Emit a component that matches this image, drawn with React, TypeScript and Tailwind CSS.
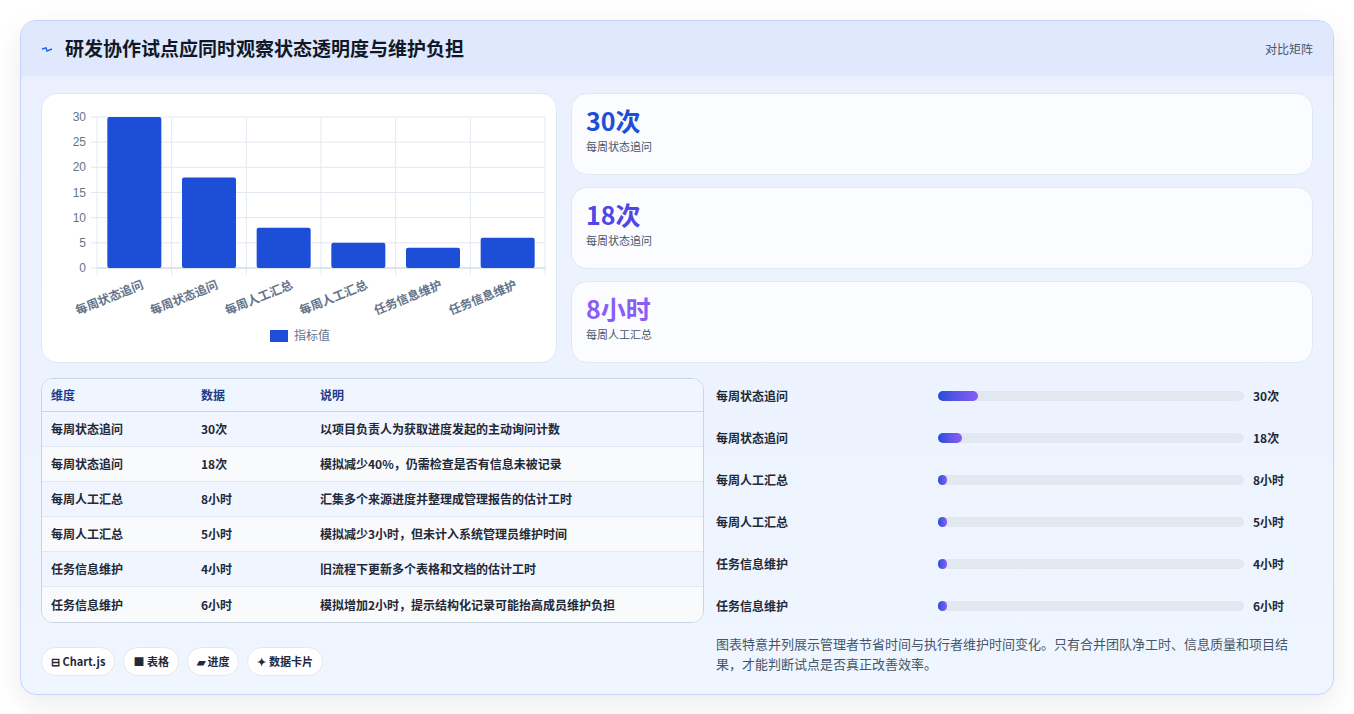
import React from 'react';

const font = { fontFamily: '"Noto Sans CJK SC", "Noto Sans", sans-serif' };

const bars = [
  { label: '每周状态追问', value: 30 },
  { label: '每周状态追问', value: 18 },
  { label: '每周人工汇总', value: 8 },
  { label: '每周人工汇总', value: 5 },
  { label: '任务信息维护', value: 4 },
  { label: '任务信息维护', value: 6 },
];

const rows = [
  { dim: '每周状态追问', data: '30次', note: '以项目负责人为获取进度发起的主动询问计数', pct: 13 },
  { dim: '每周状态追问', data: '18次', note: '模拟减少40%，仍需检查是否有信息未被记录', pct: 8 },
  { dim: '每周人工汇总', data: '8小时', note: '汇集多个来源进度并整理成管理报告的估计工时', pct: 3 },
  { dim: '每周人工汇总', data: '5小时', note: '模拟减少3小时，但未计入系统管理员维护时间', pct: 3 },
  { dim: '任务信息维护', data: '4小时', note: '旧流程下更新多个表格和文档的估计工时', pct: 3 },
  { dim: '任务信息维护', data: '6小时', note: '模拟增加2小时，提示结构化记录可能抬高成员维护负担', pct: 3 },
];

const stats = [
  { v: '30次', c: 'text-[#1d4ed8]' },
  { v: '18次', c: 'text-[#4f46e5]' },
  { v: '8小时', c: 'text-[#8b5cf6]' },
];
const statLabels = ['每周状态追问', '每周状态追问', '每周人工汇总'];

function Chart() {
  const x0 = 55, x1 = 503, y0 = 23, y1 = 174;
  const step = (x1 - x0) / 6;
  const sy = (v: number) => y1 - ((y1 - y0) * v) / 30;
  return (
    <svg width="516" height="269" viewBox="0 0 516 269">
      {[0, 5, 10, 15, 20, 25, 30].map((t) => (
        <g key={t}>
          <line x1={x0 - 6} x2={x1} y1={sy(t)} y2={sy(t)} stroke="#e2e8f0" />
          <text x={x0 - 11} y={sy(t) + 4} textAnchor="end" fontSize="12" fill="#64748b" fontFamily="Liberation Sans, sans-serif">{t}</text>
        </g>
      ))}
      {Array.from({ length: 7 }).map((_, i) => (
        <line key={i} x1={x0 + i * step} x2={x0 + i * step} y1={y0} y2={y1 + 7} stroke="#e2e8f0" />
      ))}
      <line x1={x0} x2={x1} y1={y1} y2={y1} stroke="#cbd5e1" />
      {bars.map((b, i) => {
        const cx = x0 + step * i + step / 2;
        return (
          <g key={i}>
            <rect x={cx - 27} y={sy(b.value)} width="54" height={y1 - sy(b.value)} rx="2" fill="#1d4ed8" />
            <text x={cx + 10} y={y1 + 20} textAnchor="end" fontSize="12" fontWeight="600" fill="#64748b" transform={`rotate(-22 ${cx + 10} ${y1 + 20})`} style={font}>{b.label}</text>
          </g>
        );
      })}
      <rect x="228" y="236" width="18" height="12" fill="#1d4ed8" />
      <text x="252" y="246" fontSize="12" fill="#64748b" style={font}>指标值</text>
    </svg>
  );
}

export default function App() {
  return (
    <div className="min-h-screen bg-white p-5" style={font}>
      <div className="rounded-2xl border border-[#c7d2fe] bg-gradient-to-b from-[#eaf0fe] to-[#eff6ff] shadow-[0_10px_30px_rgba(0,0,0,0.08)] overflow-hidden">
        <div className="flex items-center justify-between h-[55px] px-5 bg-[#dfe8fd]">
          <div className="flex items-center gap-3">
            <svg width="12" height="10" viewBox="0 0 12 10"><path d="M1 5 L5 4 L6 7 L11 5" stroke="#2563eb" strokeWidth="1.5" fill="none" /></svg>
            <h1 className="text-[19px] font-bold text-[#111827]">研发协作试点应同时观察状态透明度与维护负担</h1>
          </div>
          <span className="text-[12px] text-[#475569]">对比矩阵</span>
        </div>
        <div className="px-5 pt-[17px] pb-[18px]">
          <div className="flex gap-[14px]">
            <div className="w-[516px] h-[270px] shrink-0 rounded-2xl bg-white border border-[#e2e8f0]">
              <Chart />
            </div>
            <div className="flex-1 flex flex-col gap-3">
              {stats.map((s, i) => (
                <div key={i} className="h-[82px] rounded-2xl border border-[#e2e8f0] bg-[#fafcff] px-[14px] pt-[8px]">
                  <div className={`text-[25px] font-bold leading-[36px] ${s.c}`}>{s.v}</div>
                  <div className="text-[11px] text-[#475569]">{statLabels[i]}</div>
                </div>
              ))}
            </div>
          </div>
          <div className="flex gap-3 mt-[15px]">
            <div className="w-[663px] shrink-0">
              <div className="rounded-xl border border-[#cbd5e1] overflow-hidden bg-white text-[12px]">
                <div className="flex h-[33px] items-center bg-[#eff6ff] border-b border-[#cbd5e1] font-semibold text-[#1e3a8a]">
                  <div className="w-[159px] pl-[9px]">维度</div>
                  <div className="w-[119px]">数据</div>
                  <div className="flex-1">说明</div>
                </div>
                {rows.map((r, i) => (
                  <div key={i} className={`flex h-[35px] items-center font-semibold text-[#1f2937] ${i < 5 ? 'border-b border-[#e2e8f0]' : ''} ${i % 2 === 0 ? 'bg-[#f1f5ff]' : 'bg-[#f8fafc]'}`}>
                    <div className="w-[159px] pl-[9px]">{r.dim}</div>
                    <div className="w-[119px]">{r.data}</div>
                    <div className="flex-1">{r.note}</div>
                  </div>
                ))}
              </div>
              <div className="flex gap-2 mt-6 text-[11px] font-semibold text-[#1f2937]">
                <span className="rounded-full bg-white border border-[#e5e7eb] px-[9px] py-[5px]">⊟ Chart.js</span>
                <span className="rounded-full bg-white border border-[#e5e7eb] px-[9px] py-[5px]">■ 表格</span>
                <span className="rounded-full bg-white border border-[#e5e7eb] px-[9px] py-[5px]">▰ 进度</span>
                <span className="rounded-full bg-white border border-[#e5e7eb] px-[9px] py-[5px]">✦ 数据卡片</span>
              </div>
            </div>
            <div className="flex-1 pr-1">
              <div className="flex flex-col gap-[22px] pt-[8px]">
                {rows.map((r, i) => (
                  <div key={i} className="flex items-center h-[20px] text-[12px] font-semibold text-[#1f2937]">
                    <div className="w-[222px]">{r.dim}</div>
                    <div className="w-[306px] h-[10px] rounded-full bg-[#e2e8f0]">
                      <div className="h-full rounded-full bg-gradient-to-r from-[#1d4ed8] to-[#8b5cf6]" style={{ width: `${r.pct}%` }} />
                    </div>
                    <div className="pl-[9px]">{r.data}</div>
                  </div>
                ))}
              </div>
              <p className="mt-[18px] text-[13px] leading-[20px] text-[#475569]">
                图表特意并列展示管理者节省时间与执行者维护时间变化。只有合并团队净工时、信息质量和项目结果，才能判断试点是否真正改善效率。
              </p>
            </div>
          </div>
        </div>
      </div>
    </div>
  );
}
